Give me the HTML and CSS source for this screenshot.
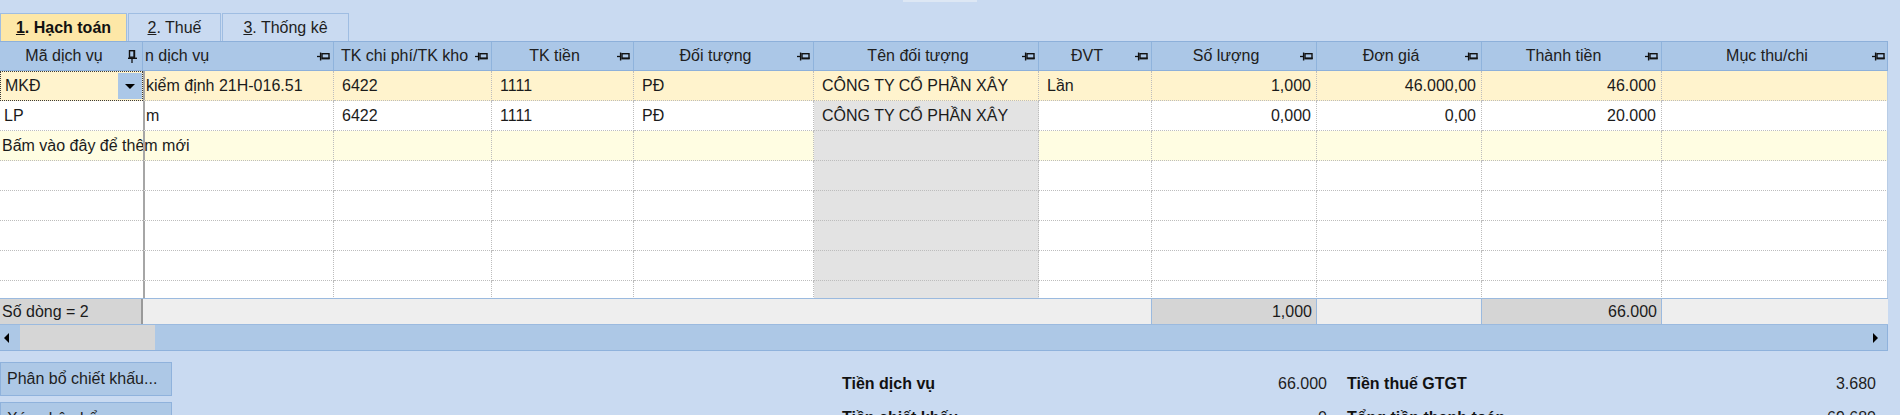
FILE: index.html
```html
<!DOCTYPE html>
<html lang="vi">
<head>
<meta charset="utf-8">
<title>Hạch toán</title>
<link rel="stylesheet" href="styles.css">
</head>
<body>
<div class="app">
  <div class="strip"></div>
  <div class="tabs">
    <div class="tab active"><span><u>1</u>. Hạch toán</span></div>
    <div class="tab t2"><span><u>2</u>. Thuế</span></div>
    <div class="tab t3"><span><u>3</u>. Thống kê</span></div>
  </div>

  <div class="grid">
    <div class="hdr cols">
      <div class="hc"><span class="ht">Mã dịch vụ</span><svg class="pinv" width="9" height="13" viewBox="0 0 9 13"><rect x="1.5" y="0.7" width="5" height="6.5" fill="none" stroke="#111" stroke-width="1.4"/><path d="M6.2 0.5v7" stroke="#111" stroke-width="1.6"/><path d="M0 8.3h9" stroke="#111" stroke-width="1.4"/><path d="M4 9v4" stroke="#111" stroke-width="1.3"/></svg></div>
      <div class="hc lft"><span class="ht">n dịch vụ</span><svg class="pin" width="13" height="9" viewBox="0 0 13 9"><path d="M0 4.5h3" stroke="#111" stroke-width="1.3"/><path d="M3.6 0.5v8" stroke="#111" stroke-width="1.4"/><rect x="5" y="1.7" width="7" height="5" fill="none" stroke="#111" stroke-width="1.4"/><path d="M5 6.2h7.6" stroke="#111" stroke-width="1.6"/></svg></div>
      <div class="hc"><span class="ht">TK chi phí/TK kho</span><svg class="pin" width="13" height="9" viewBox="0 0 13 9"><path d="M0 4.5h3" stroke="#111" stroke-width="1.3"/><path d="M3.6 0.5v8" stroke="#111" stroke-width="1.4"/><rect x="5" y="1.7" width="7" height="5" fill="none" stroke="#111" stroke-width="1.4"/><path d="M5 6.2h7.6" stroke="#111" stroke-width="1.6"/></svg></div>
      <div class="hc"><span class="ht">TK tiền</span><svg class="pin" width="13" height="9" viewBox="0 0 13 9"><path d="M0 4.5h3" stroke="#111" stroke-width="1.3"/><path d="M3.6 0.5v8" stroke="#111" stroke-width="1.4"/><rect x="5" y="1.7" width="7" height="5" fill="none" stroke="#111" stroke-width="1.4"/><path d="M5 6.2h7.6" stroke="#111" stroke-width="1.6"/></svg></div>
      <div class="hc"><span class="ht">Đối tượng</span><svg class="pin" width="13" height="9" viewBox="0 0 13 9"><path d="M0 4.5h3" stroke="#111" stroke-width="1.3"/><path d="M3.6 0.5v8" stroke="#111" stroke-width="1.4"/><rect x="5" y="1.7" width="7" height="5" fill="none" stroke="#111" stroke-width="1.4"/><path d="M5 6.2h7.6" stroke="#111" stroke-width="1.6"/></svg></div>
      <div class="hc"><span class="ht">Tên đối tượng</span><svg class="pin" width="13" height="9" viewBox="0 0 13 9"><path d="M0 4.5h3" stroke="#111" stroke-width="1.3"/><path d="M3.6 0.5v8" stroke="#111" stroke-width="1.4"/><rect x="5" y="1.7" width="7" height="5" fill="none" stroke="#111" stroke-width="1.4"/><path d="M5 6.2h7.6" stroke="#111" stroke-width="1.6"/></svg></div>
      <div class="hc"><span class="ht">ĐVT</span><svg class="pin" width="13" height="9" viewBox="0 0 13 9"><path d="M0 4.5h3" stroke="#111" stroke-width="1.3"/><path d="M3.6 0.5v8" stroke="#111" stroke-width="1.4"/><rect x="5" y="1.7" width="7" height="5" fill="none" stroke="#111" stroke-width="1.4"/><path d="M5 6.2h7.6" stroke="#111" stroke-width="1.6"/></svg></div>
      <div class="hc"><span class="ht">Số lượng</span><svg class="pin" width="13" height="9" viewBox="0 0 13 9"><path d="M0 4.5h3" stroke="#111" stroke-width="1.3"/><path d="M3.6 0.5v8" stroke="#111" stroke-width="1.4"/><rect x="5" y="1.7" width="7" height="5" fill="none" stroke="#111" stroke-width="1.4"/><path d="M5 6.2h7.6" stroke="#111" stroke-width="1.6"/></svg></div>
      <div class="hc"><span class="ht">Đơn giá</span><svg class="pin" width="13" height="9" viewBox="0 0 13 9"><path d="M0 4.5h3" stroke="#111" stroke-width="1.3"/><path d="M3.6 0.5v8" stroke="#111" stroke-width="1.4"/><rect x="5" y="1.7" width="7" height="5" fill="none" stroke="#111" stroke-width="1.4"/><path d="M5 6.2h7.6" stroke="#111" stroke-width="1.6"/></svg></div>
      <div class="hc"><span class="ht">Thành tiền</span><svg class="pin" width="13" height="9" viewBox="0 0 13 9"><path d="M0 4.5h3" stroke="#111" stroke-width="1.3"/><path d="M3.6 0.5v8" stroke="#111" stroke-width="1.4"/><rect x="5" y="1.7" width="7" height="5" fill="none" stroke="#111" stroke-width="1.4"/><path d="M5 6.2h7.6" stroke="#111" stroke-width="1.6"/></svg></div>
      <div class="hc"><span class="ht">Mục thu/chi</span><svg class="pin" width="13" height="9" viewBox="0 0 13 9"><path d="M0 4.5h3" stroke="#111" stroke-width="1.3"/><path d="M3.6 0.5v8" stroke="#111" stroke-width="1.4"/><rect x="5" y="1.7" width="7" height="5" fill="none" stroke="#111" stroke-width="1.4"/><path d="M5 6.2h7.6" stroke="#111" stroke-width="1.6"/></svg></div>
    </div>

    <div class="body">
      <div class="row cols sel">
        <div class="c c1 focus"><span class="cv">MKĐ</span><span class="dd"><span class="tri"></span></span></div>
        <div class="c c2">kiểm định 21H-016.51</div>
        <div class="c">6422</div>
        <div class="c">1111</div>
        <div class="c">PĐ</div>
        <div class="c">CÔNG TY CỔ PHẦN XÂY</div>
        <div class="c">Lần</div>
        <div class="c num">1,000</div>
        <div class="c num">46.000,00</div>
        <div class="c num">46.000</div>
        <div class="c"></div>
      </div>
      <div class="row cols">
        <div class="c c1">LP</div>
        <div class="c c2">m</div>
        <div class="c">6422</div>
        <div class="c">1111</div>
        <div class="c">PĐ</div>
        <div class="c gray">CÔNG TY CỔ PHẦN XÂY</div>
        <div class="c"></div>
        <div class="c num">0,000</div>
        <div class="c num">0,00</div>
        <div class="c num">20.000</div>
        <div class="c"></div>
      </div>
      <div class="row cols add">
        <div class="c c1 over">Bấm vào đây để thêm mới</div>
        <div class="c c2"></div>
        <div class="c"></div><div class="c"></div><div class="c"></div>
        <div class="c gray"></div>
        <div class="c"></div><div class="c"></div><div class="c"></div><div class="c"></div><div class="c"></div>
      </div>
      <div class="row cols">
        <div class="c c1"></div><div class="c c2"></div><div class="c"></div><div class="c"></div><div class="c"></div><div class="c gray"></div><div class="c"></div><div class="c"></div><div class="c"></div><div class="c"></div><div class="c"></div>
      </div>
      <div class="row cols">
        <div class="c c1"></div><div class="c c2"></div><div class="c"></div><div class="c"></div><div class="c"></div><div class="c gray"></div><div class="c"></div><div class="c"></div><div class="c"></div><div class="c"></div><div class="c"></div>
      </div>
      <div class="row cols">
        <div class="c c1"></div><div class="c c2"></div><div class="c"></div><div class="c"></div><div class="c"></div><div class="c gray"></div><div class="c"></div><div class="c"></div><div class="c"></div><div class="c"></div><div class="c"></div>
      </div>
      <div class="row cols">
        <div class="c c1"></div><div class="c c2"></div><div class="c"></div><div class="c"></div><div class="c"></div><div class="c gray"></div><div class="c"></div><div class="c"></div><div class="c"></div><div class="c"></div><div class="c"></div>
      </div>
      <div class="row cols">
        <div class="c c1"></div><div class="c c2"></div><div class="c"></div><div class="c"></div><div class="c"></div><div class="c gray"></div><div class="c"></div><div class="c"></div><div class="c"></div><div class="c"></div><div class="c"></div>
      </div>
    </div>

    <div class="foot cols">
      <div class="f fg f1">Số dòng = 2</div>
      <div class="f span-mid"></div>
      <div class="f fg num">1,000</div>
      <div class="f"></div>
      <div class="f fg num">66.000</div>
      <div class="f last"></div>
    </div>

    <div class="hscroll">
      <span class="arr-l"></span>
      <span class="thumb"></span>
      <span class="track"></span>
      <span class="arr-r"></span>
    </div>
  </div>

  <div class="bottom">
    <div class="btns">
      <div class="btn">Phân bổ chiết khấu...</div>
      <div class="btn">Xóa phân bổ</div>
    </div>
    <div class="summary">
      <div class="si"><span class="lb">Tiền dịch vụ</span><span class="vl">66.000</span></div>
      <div class="si"><span class="lb">Tiền thuế GTGT</span><span class="vl">3.680</span></div>
      <div class="si"><span class="lb">Tiền chiết khấu</span><span class="vl">0</span></div>
      <div class="si"><span class="lb">Tổng tiền thanh toán</span><span class="vl">69.680</span></div>
    </div>
  </div>
</div>
</body>
</html>
```

FILE: styles.css
```css
* { box-sizing: border-box; }

html, body {
  margin: 0;
  padding: 0;
}

body {
  width: 1900px;
  height: 415px;
  overflow: hidden;
  background: #c9daf1;
  font-family: "Liberation Sans", Arial, sans-serif;
  font-size: 16px;
  color: #1b1b1b;
}

.strip {
  width: 74px;
  height: 2px;
  margin-left: 903px;
  margin-bottom: 11px;
  background: #dde7f4;
}

/* tabs */
.tabs {
  display: flex;
  height: 28px;
  gap: 1px;
}

.tab {
  display: flex;
  align-items: center;
  justify-content: center;
  height: 28px;
  border: 1px solid #9fbde2;
  border-bottom: none;
  background: #c9daf1;
  color: #1e1e1e;
  white-space: nowrap;
}

.tab.active {
  width: 127px;
  background: #fde7a7;
  font-weight: bold;
  color: #111;
}

.tab.t2 { width: 93px; }
.tab.t3 { width: 127px; }

/* grid */
.grid {
  width: 1888px;
}

.cols {
  display: grid;
  grid-template-columns: 143px 191px 158px 142px 180px 225px 113px 165px 165px 180px 226px;
}

.hdr {
  height: 30px;
  background: #abc7e7;
  border-top: 1px solid #8db0da;
  border-bottom: 1px solid #8db0da;
  border-right: 1px solid #8db0da;
  color: #202020;
}

.hc {
  display: flex;
  align-items: center;
  padding-right: 3px;
  border-right: 1px solid #8fb3dc;
  white-space: nowrap;
  overflow: hidden;
}

.hc:last-child { border-right: none; }

.ht {
  flex: 1;
  text-align: center;
  overflow: hidden;
}

.hc.lft .ht {
  text-align: left;
  padding-left: 2px;
}

.pin, .pinv {
  flex: none;
  display: block;
}

.pinv { margin-right: 2px; }

/* body rows */
.body {
  height: 227px;
  overflow: hidden;
  background: #fff;
  border-right: 1px solid #b9cde6;
}

.row {
  height: 30px;
  background: #fff;
}

.row.sel { background: #fff3cd; }
.row.add { background: #fffde2; }

.c {
  height: 30px;
  line-height: 29px;
  padding: 0 8px;
  border-right: 1px dotted #bdbdbd;
  border-bottom: 1px dotted #bdbdbd;
  white-space: nowrap;
  overflow: hidden;
}

.c:last-child { border-right: none; }

.c1 {
  padding-left: 4px;
  border-right: none;
}

.c1.over { overflow: visible; padding-left: 2px; }

.c2 {
  border-left: 2px solid #a6a6a6;
  padding-left: 1px;
}

.num {
  text-align: right;
  padding-right: 5px;
}

.gray { background: #e3e3e3; }

.focus {
  display: flex;
  align-items: stretch;
  padding-right: 0;
  border: 1px dotted #3a3a3a;
}

.cv {
  flex: 1;
  line-height: 27px;
}

.dd {
  flex: none;
  width: 24px;
  margin: 1px 0 0;
  background: #abc7e7;
  display: flex;
  align-items: center;
  justify-content: center;
  height: 26px;
}

.tri {
  width: 0;
  height: 0;
  border-left: 5px solid transparent;
  border-right: 5px solid transparent;
  border-top: 5px solid #000;
}

/* footer */
.foot {
  height: 27px;
  border-top: 1px solid #9bbadf;
  border-bottom: 1px solid #9bbadf;
  border-right: 1px solid #9bbadf;
  background: #eeeeee;
}

.f {
  line-height: 25px;
  padding: 0 4px;
  border-right: 1px solid #9bbadf;
  white-space: nowrap;
  overflow: hidden;
  background: #eeeeee;
}

.f.last { border-right: none; }
.f1 { padding-left: 2px; border-right: 2px solid #999; }
.fg { background: #d5d5d5; }
.span-mid { grid-column: 2 / 8; }

/* horizontal scrollbar */
.hscroll {
  display: flex;
  align-items: center;
  height: 26px;
  background: #adc8e6;
  border-bottom: 1px solid #8fb2dc;
  border-right: 1px solid #8fb2dc;
}

.arr-l {
  width: 0;
  height: 0;
  margin-left: 4px;
  border-top: 5px solid transparent;
  border-bottom: 5px solid transparent;
  border-right: 5px solid #000;
}

.thumb {
  width: 135px;
  height: 25px;
  margin-left: 11px;
  background: #d6d6d6;
}

.track { flex: 1; }

.arr-r {
  width: 0;
  height: 0;
  margin-right: 9px;
  border-top: 5px solid transparent;
  border-bottom: 5px solid transparent;
  border-left: 5px solid #000;
}

/* bottom panel */
.bottom {
  display: flex;
  padding-top: 11px;
}

.btns {
  width: 172px;
  display: flex;
  flex-direction: column;
  gap: 6px;
}

.btn {
  height: 34px;
  line-height: 32px;
  padding-left: 6px;
  border: 1px solid #8fb2dc;
  background: #adc8e6;
  white-space: nowrap;
  color: #1e1e1e;
}

.summary {
  margin-left: 670px;
  margin-top: 5px;
  display: grid;
  grid-template-columns: 485px 529px;
  column-gap: 20px;
  grid-auto-rows: 34px;
}

.si {
  display: flex;
  justify-content: space-between;
  align-items: center;
  white-space: nowrap;
}

.lb {
  font-weight: bold;
  color: #111;
}

.vl { color: #1e1e1e; }
```
